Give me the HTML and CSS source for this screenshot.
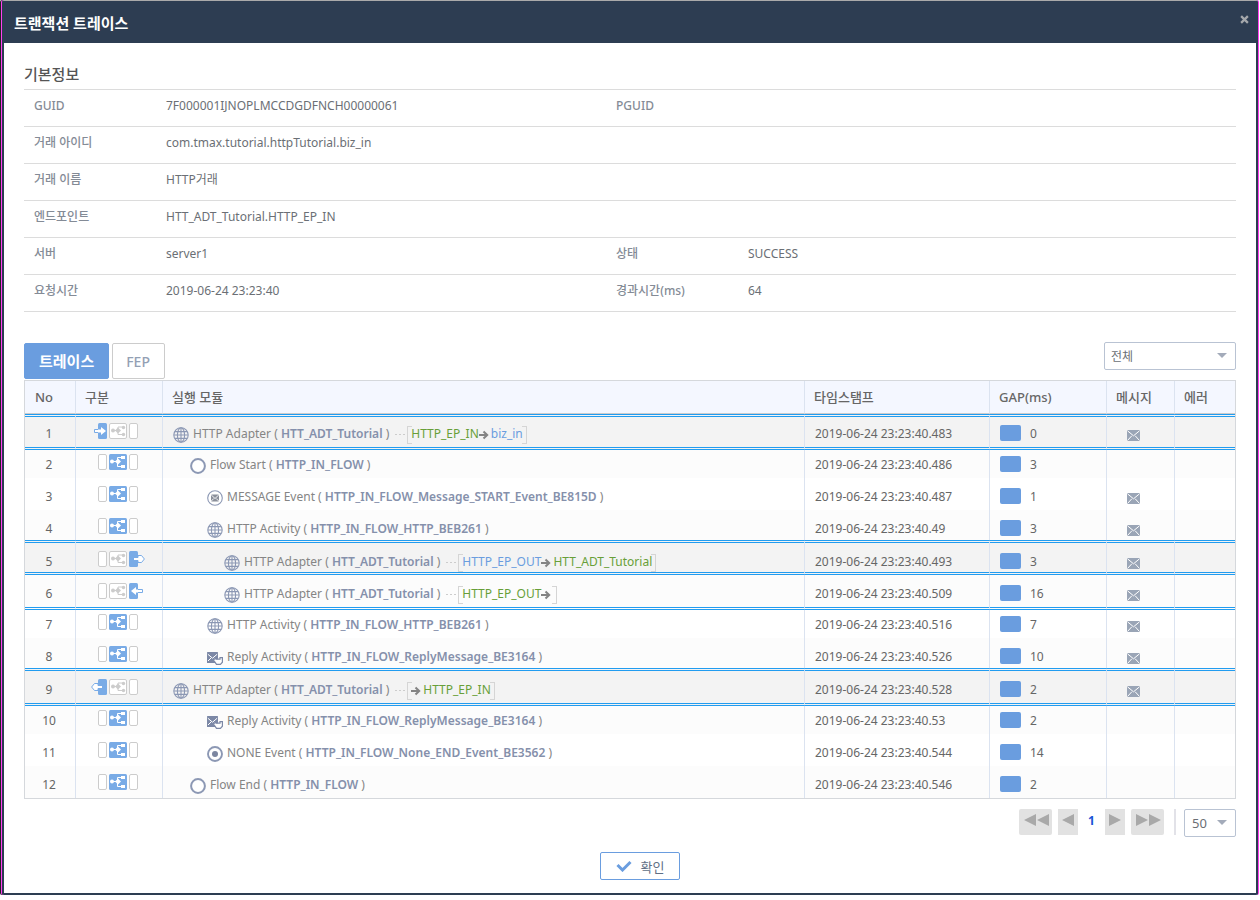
FILE: index.html
```
<!DOCTYPE html>
<html lang="ko">
<head>
<meta charset="utf-8">
<title>트랜잭션 트레이스</title>
<link rel="stylesheet" href="styles.css">
</head>
<body>
<svg class="sprite" aria-hidden="true">
  <symbol id="globe" viewBox="0 0 16 16"><g fill="none" stroke="#8c98b4" stroke-width="1.1"><circle cx="8" cy="8" r="7.2"/><ellipse cx="8" cy="8" rx="3.6" ry="7.2"/><path d="M8 1v14M1 8h14M2 4.6h12M2 11.4h12"/></g></symbol>
  <symbol id="ring" viewBox="0 0 16 16"><circle cx="8" cy="8" r="6.9" fill="#fff" stroke="#8c98b4" stroke-width="2"/></symbol>
  <symbol id="dot" viewBox="0 0 16 16"><circle cx="8" cy="8" r="7" fill="#fff" stroke="#8c98b4" stroke-width="1.9"/><circle cx="8" cy="8" r="3" fill="#7c86a0"/></symbol>
  <symbol id="msg" viewBox="0 0 16 16"><circle cx="8" cy="8" r="7.3" fill="#fff" stroke="#8c98b4" stroke-width="1.1"/><rect x="4" y="4.5" width="8" height="7" rx="1" fill="#8a8f9a"/><path d="M4.300 5l3.700 3.500 3.700-3.500M4.300 11l2.500-2.500M11.700 11l-2.500-2.500" fill="none" stroke="#fff" stroke-width=".9"/></symbol>
  <symbol id="reply" viewBox="0 0 16 16"><rect x="0" y="2" width="11" height="11" rx=".5" fill="#7c88a6"/><path d="M.8 4.200l4.700 4 4.700-4M1 11l3.500-3.500M10 11L6.500 7.500" fill="none" stroke="#fff" stroke-width="1"/><path d="M6.500 10l2.500-2.600v1.800h4V7.600h2.400v4.600l-2 2.200H9.500z" fill="#fff" stroke="#7c88a6" stroke-width="1.200"/></symbol>
  <symbol id="mail" viewBox="0 0 13 11"><rect width="13" height="11" rx="1" fill="#9aa5b6"/><path d="M.5 .8l6 5 6-5M.6 10.400l4.200-4.600M12.400 10.400L8.200 5.800" fill="none" stroke="#fff" stroke-width="1"/></symbol>
  <symbol id="arrow" viewBox="0 0 10 10"><path d="M0 5h7.500M4.500 1.500L8.200 5 4.500 8.500" fill="none" stroke="#848484" stroke-width="2"/></symbol>
  <symbol id="tree-on" viewBox="0 0 18 16"><rect width="18" height="16" rx="1.500" fill="#79abe6"/><g fill="#fff"><circle cx="3" cy="7.500" r="2"/><path d="M9 4.500l3 3-3 3-3-3zM12 2h4v3h-4zM12 11h4v3h-4z"/></g><path d="M3 7.500h7M8.500 8V3.500h5M8.500 7v5.500h5" fill="none" stroke="#fff"/></symbol>
  <symbol id="tree-off" viewBox="0 0 18 16"><rect x=".5" y=".5" width="17" height="15" rx="1.500" fill="#fff" stroke="#ccc"/><g fill="#ccc"><circle cx="4" cy="7.500" r="2"/><path d="M9 4.500l3 3-3 3-3-3z"/><circle cx="14.500" cy="4.500" r="1.700"/><circle cx="14.500" cy="11.500" r="1.700"/></g><path d="M4 7.500h6M9 8V4h5M9 7v4.500h5" fill="none" stroke="#ccc"/></symbol>
  <symbol id="slot" viewBox="0 0 9 16"><rect x=".5" y=".5" width="8" height="15" rx="1.500" fill="#fff" stroke="#ccc"/></symbol>
  <symbol id="k-mid" viewBox="0 0 54 16"><use href="#slot" x="7" width="9" height="16"/><use href="#tree-on" x="18" width="18" height="16"/><use href="#slot" x="38" width="9" height="16"/></symbol>
  <symbol id="k-in" viewBox="0 0 54 16"><rect x="7" width="9" height="16" rx="1.500" fill="#79abe6"/><path d="M4 6.500h6V4l5 4-5 4V9.500H4z" fill="#fff"/><path d="M7 6.500H3.500v3H7" fill="#fff" stroke="#79abe6"/><use href="#tree-off" x="18" width="18" height="16"/><use href="#slot" x="38" width="9" height="16"/></symbol>
  <symbol id="k-back" viewBox="0 0 54 16"><rect x="7" width="9" height="16" rx="1.500" fill="#79abe6"/><path d="M7 6.500V4.500H3.500L.6 8l2.900 3.500H7v-2" fill="#fff" stroke="#79abe6"/><path d="M5 7h6v2H5z" fill="#fff"/><use href="#tree-off" x="18" width="18" height="16"/><use href="#slot" x="38" width="9" height="16"/></symbol>
  <symbol id="k-out" viewBox="0 0 54 16"><use href="#slot" x="7" width="9" height="16"/><use href="#tree-off" x="18" width="18" height="16"/><rect x="38" width="9" height="16" rx="1.500" fill="#79abe6"/><path d="M47 6.500V4.500h3.500L53.400 8l-2.900 3.500H47v-2" fill="#fff" stroke="#79abe6"/><path d="M43 7h6v2h-6z" fill="#fff"/></symbol>
  <symbol id="k-ret" viewBox="0 0 54 16"><use href="#slot" x="7" width="9" height="16"/><use href="#tree-off" x="18" width="18" height="16"/><rect x="38" width="9" height="16" rx="1.500" fill="#79abe6"/><path d="M50 6.500h-5V4l-5 4 5 4V9.500h5z" fill="#fff"/><path d="M47 6.500h4.500v3H47" fill="#fff" stroke="#79abe6"/></symbol>
</svg>
<main class="dialog">
  <header class="titlebar">
    <h1>트랜잭션 트레이스</h1>
    <button class="close" aria-label="닫기"><svg viewBox="0 0 8 8"><path d="M1 1l6 6M7 1L1 7" stroke="#a5a8ac" stroke-width="2"/></svg></button>
  </header>
  <div class="body">
    <h2>기본정보</h2>
    <table class="info">
      <colgroup><col class="c-label"><col class="c-value"><col class="c-label"><col></colgroup>
      <tr><th>GUID</th><td>7F000001IJNOPLMCCDGDFNCH00000061</td><th>PGUID</th><td></td></tr>
      <tr><th>거래 아이디</th><td colspan="3">com.tmax.tutorial.httpTutorial.biz_in</td></tr>
      <tr><th>거래 이름</th><td colspan="3">HTTP거래</td></tr>
      <tr><th>엔드포인트</th><td colspan="3">HTT_ADT_Tutorial.HTTP_EP_IN</td></tr>
      <tr><th>서버</th><td>server1</td><th>상태</th><td>SUCCESS</td></tr>
      <tr><th>요청시간</th><td>2019-06-24 23:23:40</td><th>경과시간(ms)</th><td>64</td></tr>
    </table>

    <div class="toolbar">
      <div class="tabs"><button class="tab active">트레이스</button><button class="tab">FEP</button></div>
      <span class="select"><select aria-label="구분 선택"><option>전체</option></select></span>
    </div>

    <table class="trace">
      <colgroup><col class="c-no"><col class="c-kind"><col><col class="c-time"><col class="c-gap"><col class="c-msg"><col class="c-err"></colgroup>
      <thead><tr><th>No</th><th>구분</th><th>실행 모듈</th><th>타임스탬프</th><th>GAP(ms)</th><th>메시지</th><th>에러</th></tr></thead>
      <tbody>
        <tr class="edge first shade"><td>1</td><td><svg class="kind"><use href="#k-in"/></svg></td><td><div class="mod"><svg class="ic"><use href="#globe"/></svg><span>HTTP Adapter ( <b>HTT_ADT_Tutorial</b> )</span><i class="dash"></i><span class="link"><span class="green">HTTP_EP_IN</span><svg class="arrow"><use href="#arrow"/></svg><span class="blue">biz_in</span></span></div></td><td>2019-06-24 23:23:40.483</td><td><span class="gap">0</span></td><td><svg class="mail"><use href="#mail"/></svg></td><td></td></tr>
        <tr class="after"><td>2</td><td><svg class="kind"><use href="#k-mid"/></svg></td><td><div class="mod l1"><svg class="ic"><use href="#ring"/></svg><span>Flow Start ( <b>HTTP_IN_FLOW</b> )</span></div></td><td>2019-06-24 23:23:40.486</td><td><span class="gap">3</span></td><td></td><td></td></tr>
        <tr><td>3</td><td><svg class="kind"><use href="#k-mid"/></svg></td><td><div class="mod l2"><svg class="ic"><use href="#msg"/></svg><span>MESSAGE Event ( <b>HTTP_IN_FLOW_Message_START_Event_BE815D</b> )</span></div></td><td>2019-06-24 23:23:40.487</td><td><span class="gap">1</span></td><td><svg class="mail"><use href="#mail"/></svg></td><td></td></tr>
        <tr class="before"><td>4</td><td><svg class="kind"><use href="#k-mid"/></svg></td><td><div class="mod l2"><svg class="ic"><use href="#globe"/></svg><span>HTTP Activity ( <b>HTTP_IN_FLOW_HTTP_BEB261</b> )</span></div></td><td>2019-06-24 23:23:40.49</td><td><span class="gap">3</span></td><td><svg class="mail"><use href="#mail"/></svg></td><td></td></tr>
        <tr class="edge inner shade"><td>5</td><td><svg class="kind"><use href="#k-out"/></svg></td><td><div class="mod l3"><svg class="ic"><use href="#globe"/></svg><span>HTTP Adapter ( <b>HTT_ADT_Tutorial</b> )</span><i class="dash"></i><span class="link"><span class="blue">HTTP_EP_OUT</span><svg class="arrow"><use href="#arrow"/></svg><span class="green">HTT_ADT_Tutorial</span></span></div></td><td>2019-06-24 23:23:40.493</td><td><span class="gap">3</span></td><td><svg class="mail"><use href="#mail"/></svg></td><td></td></tr>
        <tr class="edge follow"><td>6</td><td><svg class="kind"><use href="#k-ret"/></svg></td><td><div class="mod l3"><svg class="ic"><use href="#globe"/></svg><span>HTTP Adapter ( <b>HTT_ADT_Tutorial</b> )</span><i class="dash"></i><span class="link"><span class="green">HTTP_EP_OUT</span><svg class="arrow"><use href="#arrow"/></svg></span></div></td><td>2019-06-24 23:23:40.509</td><td><span class="gap">16</span></td><td><svg class="mail"><use href="#mail"/></svg></td><td></td></tr>
        <tr class="after"><td>7</td><td><svg class="kind"><use href="#k-mid"/></svg></td><td><div class="mod l2"><svg class="ic"><use href="#globe"/></svg><span>HTTP Activity ( <b>HTTP_IN_FLOW_HTTP_BEB261</b> )</span></div></td><td>2019-06-24 23:23:40.516</td><td><span class="gap">7</span></td><td><svg class="mail"><use href="#mail"/></svg></td><td></td></tr>
        <tr class="before"><td>8</td><td><svg class="kind"><use href="#k-mid"/></svg></td><td><div class="mod l2"><svg class="ic"><use href="#reply"/></svg><span>Reply Activity ( <b>HTTP_IN_FLOW_ReplyMessage_BE3164</b> )</span></div></td><td>2019-06-24 23:23:40.526</td><td><span class="gap">10</span></td><td><svg class="mail"><use href="#mail"/></svg></td><td></td></tr>
        <tr class="edge shade"><td>9</td><td><svg class="kind"><use href="#k-back"/></svg></td><td><div class="mod"><svg class="ic"><use href="#globe"/></svg><span>HTTP Adapter ( <b>HTT_ADT_Tutorial</b> )</span><i class="dash"></i><span class="link"><svg class="arrow"><use href="#arrow"/></svg><span class="green">HTTP_EP_IN</span></span></div></td><td>2019-06-24 23:23:40.528</td><td><span class="gap">2</span></td><td><svg class="mail"><use href="#mail"/></svg></td><td></td></tr>
        <tr class="after"><td>10</td><td><svg class="kind"><use href="#k-mid"/></svg></td><td><div class="mod l2"><svg class="ic"><use href="#reply"/></svg><span>Reply Activity ( <b>HTTP_IN_FLOW_ReplyMessage_BE3164</b> )</span></div></td><td>2019-06-24 23:23:40.53</td><td><span class="gap">2</span></td><td></td><td></td></tr>
        <tr><td>11</td><td><svg class="kind"><use href="#k-mid"/></svg></td><td><div class="mod l2"><svg class="ic"><use href="#dot"/></svg><span>NONE Event ( <b>HTTP_IN_FLOW_None_END_Event_BE3562</b> )</span></div></td><td>2019-06-24 23:23:40.544</td><td><span class="gap">14</span></td><td></td><td></td></tr>
        <tr><td>12</td><td><svg class="kind"><use href="#k-mid"/></svg></td><td><div class="mod l1"><svg class="ic"><use href="#ring"/></svg><span>Flow End ( <b>HTTP_IN_FLOW</b> )</span></div></td><td>2019-06-24 23:23:40.546</td><td><span class="gap">2</span></td><td></td><td></td></tr>
      </tbody>
    </table>

    <nav class="pager" aria-label="페이지">
      <button class="pg wide" aria-label="처음"><svg viewBox="0 0 26 12"><path d="M13 0v12L1 6zM26 0v12L14 6z"/></svg></button>
      <button class="pg" aria-label="이전"><svg viewBox="0 0 12 12"><path d="M12 0v12L0 6z"/></svg></button>
      <a class="current" href="#">1</a>
      <button class="pg" aria-label="다음"><svg viewBox="0 0 12 12"><path d="M0 0v12l12-6z"/></svg></button>
      <button class="pg wide" aria-label="마지막"><svg viewBox="0 0 26 12"><path d="M1 0v12l12-6zM14 0v12l12-6z"/></svg></button>
      <i class="bar"></i>
      <span class="select small"><select aria-label="페이지당 행 수"><option>50</option></select></span>
    </nav>
    <div class="actions"><button class="ok"><svg viewBox="0 0 16 12"><path d="M1.500 5l5 5L14.500 2" fill="none" stroke="#6a9ddf" stroke-width="3"/></svg><span>확인</span></button></div>
  </div>
</main>
</body>
</html>
```
FILE: styles.css
```
* { box-sizing: border-box; }
body {
  margin: 0;
  padding: 0 2px 5px;
  min-height: 100vh;
  display: flex;
  background: #fff;
  color: #6b6f75;
  font: 12px/16px "Noto Sans", "Noto Sans CJK KR", sans-serif;
}
button, select { font: inherit; color: inherit; margin: 0; }
button { padding: 0; border: 0; background: none; cursor: pointer; }
table { width: 100%; border-collapse: separate; border-spacing: 0; table-layout: fixed; }
th { text-align: left; }
.sprite { position: absolute; width: 0; height: 0; }

.dialog {
  flex: 1;
  border: 2px solid #2d3d52;
  border-top: 1px solid #aaa;
  border-radius: 2px;
  box-shadow: 1px 0 #ff40f0, -1px 0 #ff40f0, -2px 0 #222;
}
.titlebar {
  display: flex;
  justify-content: space-between;
  align-items: center;
  height: 42px;
  padding: 2px 7px 0 10px;
  background: #2d3d52;
  color: #fff;
}
h1 { margin: 0; font-size: 15px; line-height: 20px; font-weight: 700; }
.close { width: 10px; height: 18px; align-self: flex-start; margin-top: 8px; }
.close svg { width: 9px; height: 9px; }
.body { padding: 21px 20px 12px; }
h2 { margin: 0; padding-bottom: 5px; font-size: 15px; line-height: 20px; font-weight: 500; color: #555; }

.info { border-top: 1px solid #dcdcdc; }
.info th, .info td { height: 37px; padding: 8px 10px; vertical-align: top; border-bottom: 1px solid #dcdcdc; }
.info th { font-weight: 500; color: #848b96; }
.c-label { width: 132px; }
.c-value { width: 450px; }

.toolbar { display: flex; justify-content: space-between; margin-top: 30px; }
.tabs { display: flex; gap: 3px; height: 37px; margin-top: 1px; }
.tab { height: 36px; padding: 1px 14px 0 13px; border: 1px solid #ccc; border-radius: 2px; font-size: 14px; font-weight: 500; color: #93a0b4; }
.tab.active { padding: 0 14px; border-color: #6a9ddf; background: #6a9ddf; color: #fff; font-size: 15px; font-weight: 700; }
.select { position: relative; width: 132px; height: 28px; }
.select select { appearance: none; width: 100%; height: 100%; padding: 2px 6px 0; border: 1px solid #b9c3d3; border-radius: 2px; background: #fff; }
.select::after { content: ""; position: absolute; right: 9px; top: 11px; border: 5px solid transparent; border-top-color: #a3abba; border-bottom: 0; pointer-events: none; }
.select.small { width: 52px; font-size: 13px; }
.select.small select { padding: 0 7px; }

.trace { border: 1px solid #d5d8dc; }
.trace th { height: 33px; padding: 0 9px; background: #f4f7ff; border-right: 1px solid #dbe3f0; border-bottom: 1px solid #ccc; font-size: 13px; font-weight: 500; color: #666; }
.trace td { height: 32px; padding: 11px 9px 0; vertical-align: top; border-right: 1px solid #dbe3f0; color: #666; }
.trace th:last-child, .trace td:last-child { border-right: 0; }
.trace td:first-child, .trace td:nth-child(2), .trace td:nth-child(6) { text-align: center; padding-left: 0; padding-right: 2px; }
.trace th:first-child { padding-left: 10px; }
.trace td:nth-child(4) { padding-left: 10px; }
.trace td:nth-child(6) { padding-right: 14px; }
.trace tr:nth-child(even) td { background: #fcfcfc; }
.trace .before td { height: 30px; }
.trace .after td { height: 28px; padding-top: 7px; }
.trace .edge td { height: 38px; border-top: 3px double #219cf0; border-bottom: 3px double #219cf0; }
.trace .first td { height: 36px; padding-top: 9px; }
.trace .inner td { height: 35px; }
.trace .follow td { height: 35px; padding-top: 11px; border-top: 0; }
.trace .shade td { background: #f3f3f3; }
.c-no { width: 51px; }
.c-kind { width: 87px; }
.c-time { width: 185px; }
.c-gap { width: 117px; }
.c-msg { width: 68px; }
.c-err { width: 60px; }

.kind { display: block; width: 54px; height: 16px; margin: -3px auto 0; }
.mail { display: block; width: 13px; height: 11px; margin: 4px auto 0; }
.mod { display: flex; align-items: center; height: 16px; color: #858585; white-space: nowrap; }
.mod b { font-weight: 600; color: #8590ab; }
.ic { width: 16px; height: 16px; margin: 2px 4px 0 1px; flex: none; }
.l1 { padding-left: 17px; }
.l2 { padding-left: 34px; }
.l3 { padding-left: 51px; }
.dash { width: 10px; margin: 0 2px 0 6px; height: 1px; background: repeating-linear-gradient(90deg, #ccc 0 2px, transparent 2px 4px); }
.link { position: relative; display: flex; align-items: center; height: 18px; padding: 0 4px; margin-top: 2px; }
.link::before, .link::after { content: ""; position: absolute; top: 0; bottom: 0; width: 4px; border: 1px solid #d5d5d5; }
.link::before { left: 0; border-right: 0; }
.link::after { right: 0; border-left: 0; }
.link span { margin-top: -2px; }
.arrow { width: 10px; height: 10px; margin-right: 2px; }
.green { color: #689f38; }
.blue { color: #6a9ddf; }
.gap { display: flex; align-items: center; gap: 9px; height: 16px; padding-left: 1px; }
.gap::before { content: ""; width: 21px; height: 16px; margin-top: -2px; border-radius: 2px; background: #6a9ddf; }

.pager { display: flex; justify-content: flex-end; gap: 6px; margin-top: 10px; }
.pg { width: 20px; height: 26px; background: #e2e2e2; }
.pg.wide { width: 33px; border-radius: 2px; }
.pg svg { height: 12px; fill: #a9a9a9; }
.current { width: 15px; line-height: 24px; text-align: center; font-weight: 700; color: #1a56d6; text-decoration: none; }
.bar { width: 2px; height: 26px; margin: 0 2px 0 4px; background: #e2e2e8; }
.actions { display: flex; justify-content: center; margin-top: 15px; padding-left: 20px; }
.ok { display: flex; align-items: center; gap: 9px; height: 28px; padding: 0 15px; border: 1px solid #6a9ddf; border-radius: 2px; color: #5f6f85; font-size: 13px; }
.ok svg { width: 16px; height: 12px; }
.ok span { padding-top: 2px; }
```
